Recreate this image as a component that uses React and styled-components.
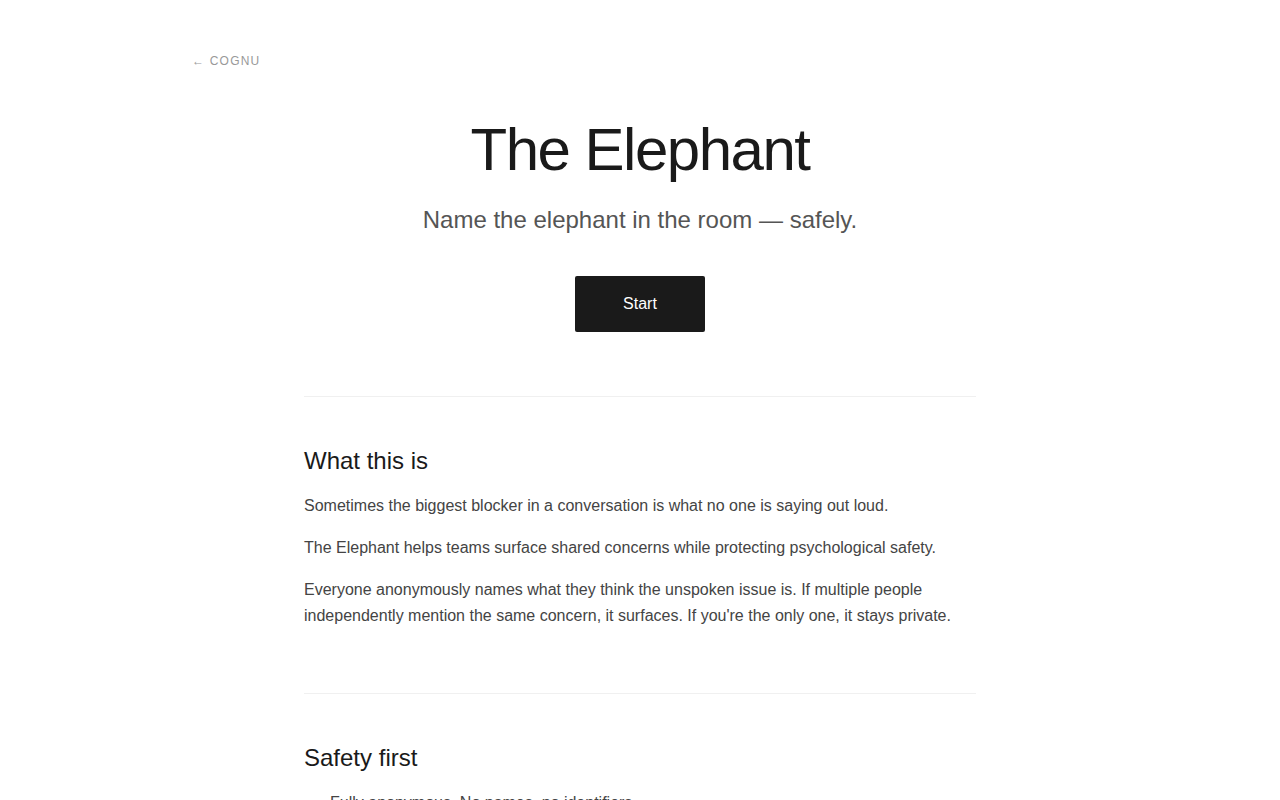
import React from "react";
import styled, { createGlobalStyle } from "styled-components";

const GlobalStyle = createGlobalStyle`
  * { box-sizing: border-box; }
  body {
    margin: 0;
    background: #ffffff;
    font-family: "Liberation Sans", Arial, Helvetica, sans-serif;
    color: #1a1a1a;
  }
`;

function App() {
  return (
    <>
      <GlobalStyle />
      <Page>
        <BackLink href="#">← COGNU</BackLink>
        <Hero>
          <Title>The Elephant</Title>
          <Subtitle>Name the elephant in the room — safely.</Subtitle>
          <StartButton>Start</StartButton>
        </Hero>
        <Content>
          <Section>
            <SectionTitle>What this is</SectionTitle>
            <Text>
              Sometimes the biggest blocker in a conversation is what no one is
              saying out loud.
            </Text>
            <Text>
              The Elephant helps teams surface shared concerns while protecting
              psychological safety.
            </Text>
            <Text>
              Everyone anonymously names what they think the unspoken issue is.
              If multiple people independently mention the same concern, it
              surfaces. If you're the only one, it stays private.
            </Text>
          </Section>
          <Section>
            <SectionTitle>Safety first</SectionTitle>
            <List>
              <Item>Fully anonymous. No names, no identifiers.</Item>
              <Item>Only concerns shared by several people are ever shown.</Item>
              <Item>Individual answers are never revealed.</Item>
            </List>
          </Section>
        </Content>
      </Page>
    </>
  );
}

export default App;

const Page = styled.div`
  max-width: 896px;
  margin: 0 auto;
  padding: 51px 0 80px;
`;

const BackLink = styled.a`
  display: inline-block;
  font-size: 12px;
  line-height: 18px;
  letter-spacing: 0.1em;
  color: #999999;
  text-decoration: none;
`;

const Hero = styled.header`
  display: flex;
  flex-direction: column;
  align-items: center;
  padding: 47px 0 64px;
  text-align: center;
`;

const Title = styled.h1`
  margin: 0;
  font-size: 60px;
  line-height: 66px;
  font-weight: 400;
  letter-spacing: -0.025em;
  color: #1a1a1a;
`;

const Subtitle = styled.p`
  margin: 20px 0 0;
  font-size: 24px;
  line-height: 34px;
  color: #555555;
`;

const StartButton = styled.button`
  margin-top: 39px;
  padding: 18px 48px;
  font-family: inherit;
  font-size: 16px;
  line-height: 20px;
  color: #ffffff;
  background: #1a1a1a;
  border: none;
  border-radius: 2px;
  cursor: pointer;
`;

const Content = styled.main`
  max-width: 672px;
  margin: 0 auto;
`;

const Section = styled.section`
  border-top: 1px solid #f0f0f0;
  padding: 48px 0;

  & + & {
    padding-top: 48px;
  }
`;

const SectionTitle = styled.h2`
  margin: 0 0 17px;
  font-size: 24px;
  line-height: 31px;
  font-weight: 400;
  color: #1a1a1a;
`;

const Text = styled.p`
  margin: 0 0 16px;
  font-size: 16px;
  line-height: 26px;
  color: #444444;
`;

const List = styled.ul`
  margin: 0;
  padding: 0 0 0 26px;
  color: #444444;
`;

const Item = styled.li`
  font-size: 16px;
  line-height: 26px;
  margin-bottom: 10px;
`;
